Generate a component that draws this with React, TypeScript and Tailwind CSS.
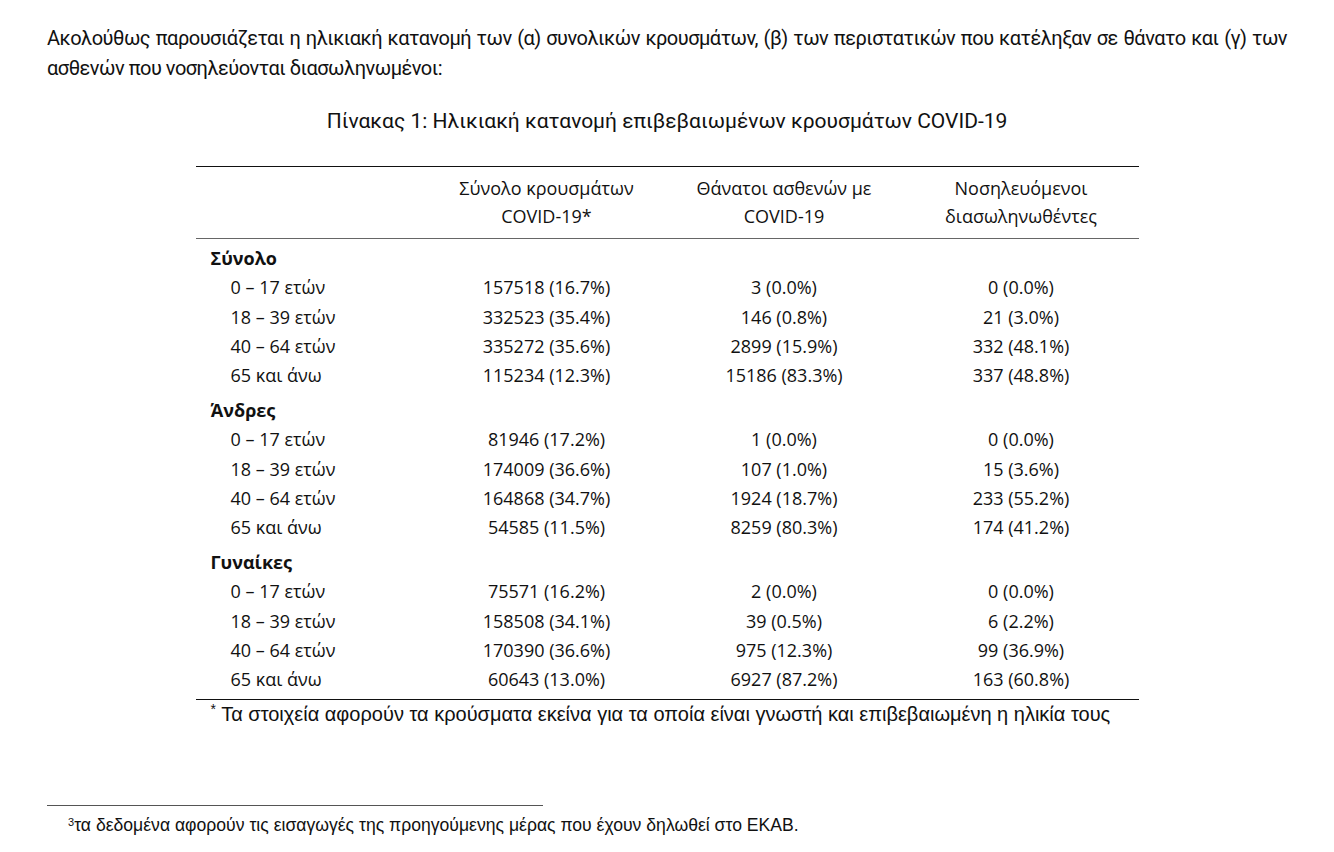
const groups = [
  {
    title: "Σύνολο",
    rows: [
      ["0 – 17 ετών", "157518 (16.7%)", "3 (0.0%)", "0 (0.0%)"],
      ["18 – 39 ετών", "332523 (35.4%)", "146 (0.8%)", "21 (3.0%)"],
      ["40 – 64 ετών", "335272 (35.6%)", "2899 (15.9%)", "332 (48.1%)"],
      ["65 και άνω", "115234 (12.3%)", "15186 (83.3%)", "337 (48.8%)"],
    ],
  },
  {
    title: "Άνδρες",
    rows: [
      ["0 – 17 ετών", "81946 (17.2%)", "1 (0.0%)", "0 (0.0%)"],
      ["18 – 39 ετών", "174009 (36.6%)", "107 (1.0%)", "15 (3.6%)"],
      ["40 – 64 ετών", "164868 (34.7%)", "1924 (18.7%)", "233 (55.2%)"],
      ["65 και άνω", "54585 (11.5%)", "8259 (80.3%)", "174 (41.2%)"],
    ],
  },
  {
    title: "Γυναίκες",
    rows: [
      ["0 – 17 ετών", "75571 (16.2%)", "2 (0.0%)", "0 (0.0%)"],
      ["18 – 39 ετών", "158508 (34.1%)", "39 (0.5%)", "6 (2.2%)"],
      ["40 – 64 ετών", "170390 (36.6%)", "975 (12.3%)", "99 (36.9%)"],
      ["65 και άνω", "60643 (13.0%)", "6927 (87.2%)", "163 (60.8%)"],
    ],
  },
];

const cols = "grid grid-cols-[233px_236px_239px_235px]";

export default function App() {
  return (
    <div className="w-[1334px] h-[852px] bg-white text-[#111] overflow-hidden font-['Roboto',sans-serif]">
      <div className="mx-[47px] pt-[23px]">
        {/* intro paragraph, first line justified to full width */}
        <div className="text-[20px] leading-[30px] tracking-[-0.5px]">
          <p className="whitespace-nowrap text-justify [text-align-last:justify]">
            Ακολούθως παρουσιάζεται η ηλικιακή κατανομή των (α) συνολικών κρουσμάτων, (β) των περιστατικών που κατέληξαν σε θάνατο και (γ) των
          </p>
          <p>ασθενών που νοσηλεύονται διασωληνωμένοι:</p>
        </div>
        <p className="mt-[24px] text-center text-[21px] leading-[28px]">
          Πίνακας 1: Ηλικιακή κατανομή επιβεβαιωμένων κρουσμάτων COVID-19
        </p>

        <div className="mx-auto mt-[31px] w-[943px] font-['Open_Sans',sans-serif] text-[18px]">
          <div className="border-t-[1.5px] border-[#111]" />
          <div className={`${cols} pt-[7px] pb-[8px] leading-[28px] text-center border-b-[1.5px] border-[#666]`}>
            <div />
            <div>Σύνολο κρουσμάτων<br />COVID-19*</div>
            <div>Θάνατοι ασθενών με<br />COVID-19</div>
            <div>Νοσηλευόμενοι<br />διασωληνωθέντες</div>
          </div>
          <div className="pt-[5px] pb-[5px] border-b-[1.5px] border-[#111]">
            {groups.map((g, gi) => (
              <div key={g.title} className={gi > 0 ? "mt-[5.5px]" : ""}>
                <div className="h-[29.3px] leading-[29.3px] pl-[15px] font-bold">{g.title}</div>
                {g.rows.map((r) => (
                  <div key={r[0]} className={`${cols} h-[29.3px] leading-[29.3px]`}>
                    <div className="pl-[35px]">{r[0]}</div>
                    <div className="text-center">{r[1]}</div>
                    <div className="text-center">{r[2]}</div>
                    <div className="text-center">{r[3]}</div>
                  </div>
                ))}
              </div>
            ))}
          </div>
          <p className="pl-[15px] mt-[2px] font-['Liberation_Sans',sans-serif] text-[20px] leading-[24px]">
            <sup className="text-[14px]">*</sup> Τα στοιχεία αφορούν τα κρούσματα εκείνα για τα οποία είναι γνωστή και επιβεβαιωμένη η ηλικία τους
          </p>
        </div>

        <div className="mt-[79px] w-[496px] border-t border-[#555]" />
        <p className="mt-[9px] pl-[21px] font-['Liberation_Sans',sans-serif] text-[17.6px] leading-[20px]">
          <sup className="text-[11px]">3</sup>τα δεδομένα αφορούν τις εισαγωγές της προηγούμενης μέρας που έχουν δηλωθεί στο ΕΚΑΒ.
        </p>
      </div>
    </div>
  );
}
